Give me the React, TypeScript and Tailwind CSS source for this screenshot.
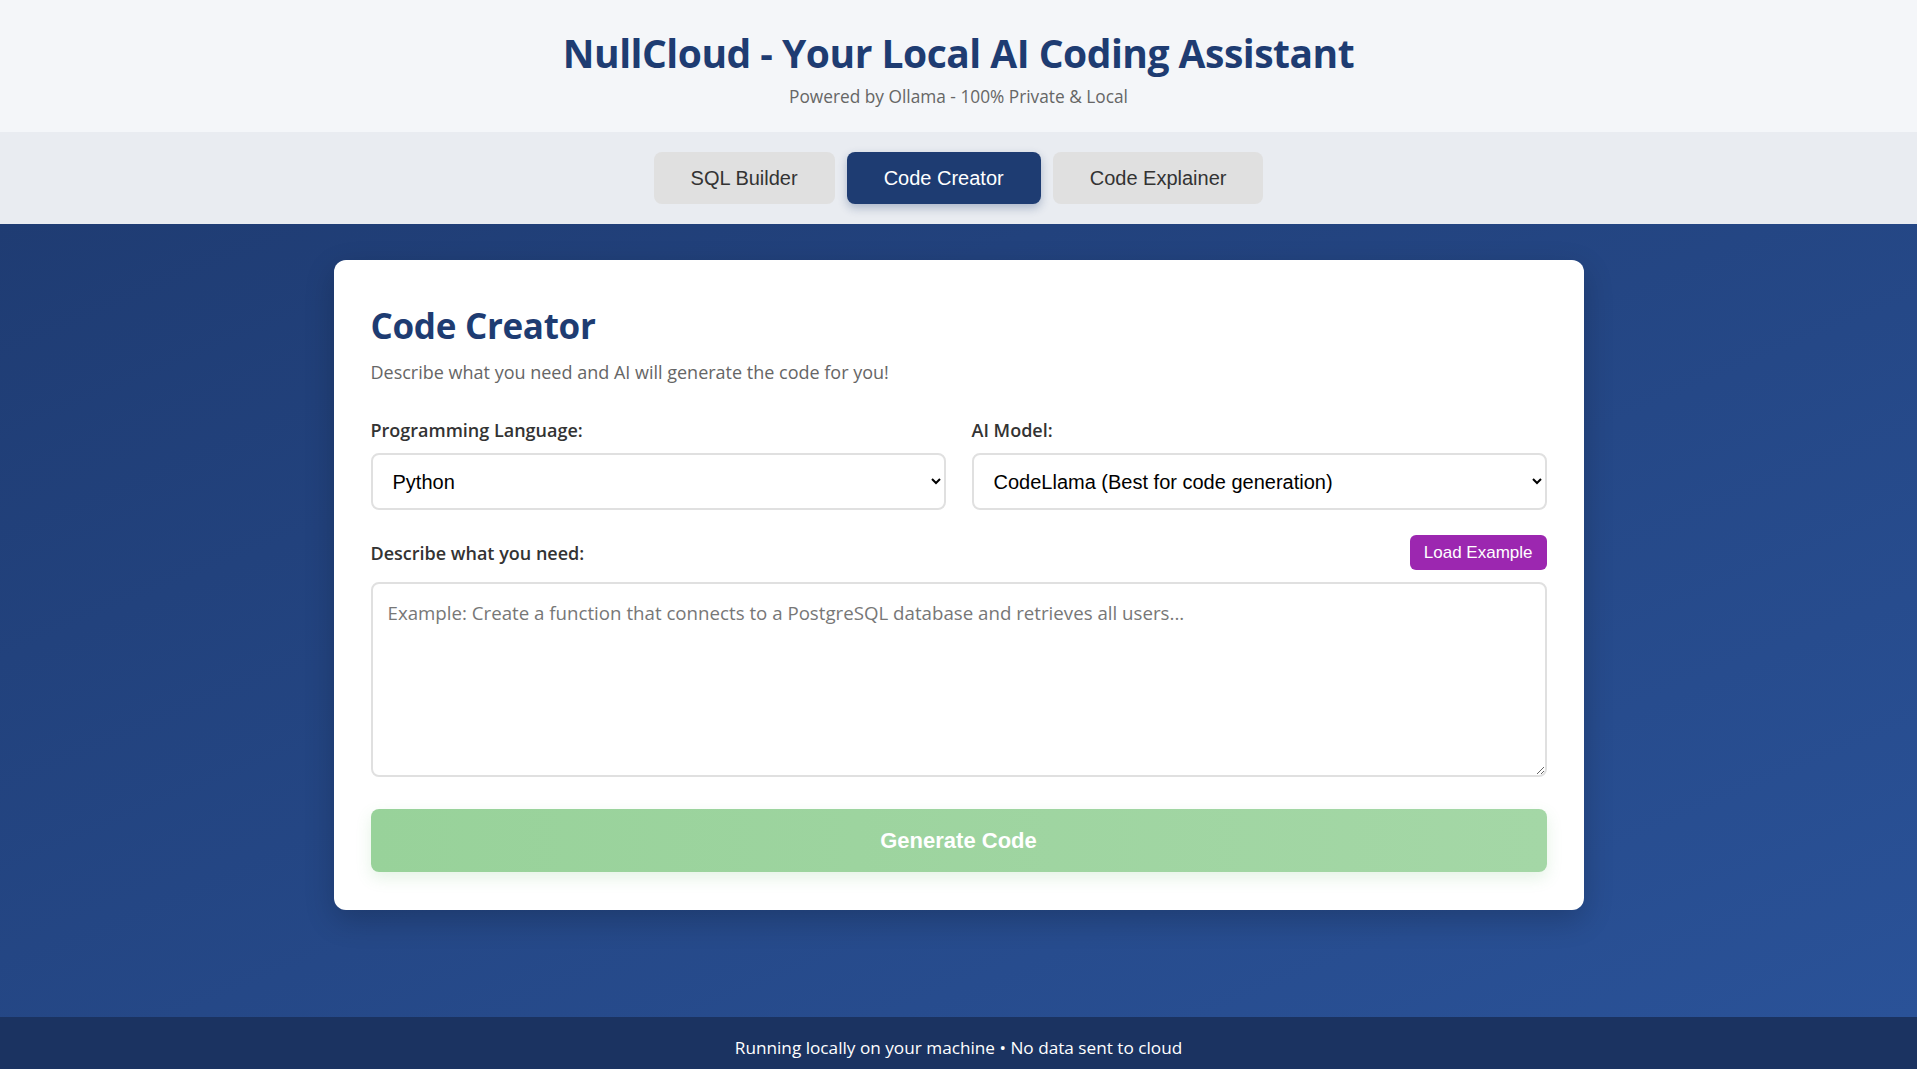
import React, { useState } from 'react';

const tabs = ['SQL Builder', 'Code Creator', 'Code Explainer'];

const App = () => {
    const [activeTab, setActiveTab] = useState('Code Creator');
    const [language, setLanguage] = useState('python');
    const [model, setModel] = useState('codellama');
    const [prompt, setPrompt] = useState('');

    return (
        <div className="min-h-screen flex flex-col font-['Open_Sans',sans-serif]">
            {/* Header */}
            <header className="bg-[#f4f6f9] h-[132px] flex flex-col items-center pt-[23px]">
                <h1 className="text-[39px] leading-[60px] font-bold text-[#1e3c72] tracking-[-0.5px]">NullCloud - Your Local AI Coding Assistant</h1>
                <p className="text-[17.3px] leading-[26px] text-[#666] mt-[1px]">Powered by Ollama - 100% Private &amp; Local</p>
            </header>

            {/* Tabs */}
            <nav className="bg-[#e9ecf1] h-[92px] flex justify-center items-center gap-[12px]">
                {tabs.map((tab) => (
                    <button
                        key={tab}
                        onClick={() => setActiveTab(tab)}
                        className={`h-[52px] px-[37px] rounded-[8px] text-[20px] font-['Liberation_Sans',Arial,sans-serif] ${activeTab === tab ? 'bg-[#1e3c72] text-white shadow-[0_4px_10px_rgba(30,60,114,0.3)]' : 'bg-[#e0e0e0] text-[#333]'}`}
                    >
                        {tab}
                    </button>
                ))}
            </nav>

            {/* Main */}
            <main className="flex-1 bg-gradient-to-br from-[#1f3c73] to-[#2a5298] pt-[36px] pb-[100px]">
                <div className="w-[1250px] mx-auto bg-white rounded-[12px] px-[37px] pt-[41px] pb-[38px] shadow-[0_10px_30px_rgba(0,0,0,0.2)]">
                    <h2 className="text-[35px] leading-[50px] font-bold text-[#1e3c72] tracking-[-0.3px]">Code Creator</h2>
                    <p className="text-[18px] leading-[26px] text-[#666] mt-[8px]">Describe what you need and AI will generate the code for you!</p>

                    <div className="grid grid-cols-2 gap-[26px] mt-[32px]">
                        <div>
                            <label className="block text-[18px] leading-[26px] font-semibold text-[#333] mb-[10px]">Programming Language:</label>
                            <select
                                value={language}
                                onChange={(e) => setLanguage(e.target.value)}
                                className="w-full h-[57px] border-2 border-[#e0e0e0] rounded-[8px] px-[16px] text-[20px] text-black bg-white font-['Liberation_Sans',Arial,sans-serif]"
                            >
                                <option value="python">Python</option>
                                <option value="javascript">JavaScript</option>
                                <option value="java">Java</option>
                            </select>
                        </div>
                        <div>
                            <label className="block text-[18px] leading-[26px] font-semibold text-[#333] mb-[10px]">AI Model:</label>
                            <select
                                value={model}
                                onChange={(e) => setModel(e.target.value)}
                                className="w-full h-[57px] border-2 border-[#e0e0e0] rounded-[8px] px-[16px] text-[20px] text-black bg-white font-['Liberation_Sans',Arial,sans-serif]"
                            >
                                <option value="codellama">CodeLlama (Best for code generation)</option>
                                <option value="llama3">Llama 3</option>
                            </select>
                        </div>
                    </div>

                    <div className="flex justify-between items-center mt-[25px]">
                        <label className="text-[18px] leading-[26px] font-semibold text-[#333]">Describe what you need:</label>
                        <button className="h-[35px] px-[14px] rounded-[6px] bg-[#9c27b0] text-white text-[17px] font-['Liberation_Sans',Arial,sans-serif]">Load Example</button>
                    </div>

                    <textarea
                        value={prompt}
                        onChange={(e) => setPrompt(e.target.value)}
                        placeholder="Example: Create a function that connects to a PostgreSQL database and retrieves all users..."
                        className="block w-full h-[195px] mt-[12px] border-2 border-[#e0e0e0] rounded-[8px] px-[15px] pt-[15px] pb-[12px] text-[18.7px] placeholder:text-[#777] outline-none"
                    />

                    <button
                        disabled
                        className="w-full h-[63px] mt-[32px] rounded-[8px] bg-gradient-to-r from-[#98d29a] to-[#a4d7a6] text-white text-[22px] font-bold font-['Liberation_Sans',Arial,sans-serif] shadow-[0_6px_16px_rgba(76,175,80,0.15)]"
                    >
                        Generate Code
                    </button>
                </div>
            </main>

            {/* Footer */}
            <footer className="bg-[#1b3361] h-[52px] flex justify-center pt-[19px]">
                <p className="text-[17.2px] leading-[24px] text-white">Running locally on your machine • No data sent to cloud</p>
            </footer>
        </div>
    );
};

export default App;
